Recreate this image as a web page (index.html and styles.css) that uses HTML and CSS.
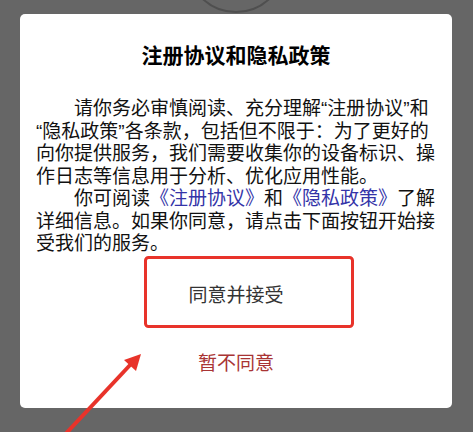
FILE: index.html
```html
<!DOCTYPE html>
<html lang="zh-CN">
<head>
    <meta charset="UTF-8">
    <meta name="viewport" content="width=device-width, initial-scale=1.0">
    <title>注册协议和隐私政策</title>
    <link rel="stylesheet" href="styles.css">
</head>
<body>
    <div class="avatar"></div>
    <div class="dialog">
        <div class="header">注册协议和隐私政策</div>
        <div class="content">
            <p>请你务必审慎阅读、充分理解“注册协议”和“隐私政策”各条款，包括但不限于：为了更好的向你提供服务，我们需要收集你的设备标识、操作日志等信息用于分析、优化应用性能。</p>
            <p>你可阅读<a href="#">《注册协议》</a>和<a href="#">《隐私政策》</a>了解详细信息。如果你同意，请点击下面按钮开始接受我们的服务。</p>
        </div>
        <div class="footer">
            <button class="button btn-ok">同意并接受</button>
            <button class="button btn-cancel">暂不同意</button>
        </div>
    </div>

    <!-- 标注：红框和箭头 -->
    <svg class="mark" width="473" height="432" viewBox="0 0 473 432">
        <rect x="145.5" y="257.5" width="207" height="69" rx="3" fill="none" stroke="#e8332a" stroke-width="3"/>
        <line x1="58" y1="442" x2="131" y2="364" stroke="#e8332a" stroke-width="4"/>
        <polygon points="141,354 136,371 124,360" fill="#e8332a"/>
    </svg>
</body>
</html>
```

FILE: styles.css
```css
html, body {
    margin: 0;
    padding: 0;
}
body {
    background-color: #666;
    height: 432px;
    overflow: hidden;
    position: relative;
    font-family: "Liberation Sans", "Noto Sans CJK SC", sans-serif;
    color: #111;
}
.avatar {
    position: absolute;
    left: 186px;
    top: -87px;
    width: 96px;
    height: 96px;
    border: 2px solid #4f4f4f;
    border-radius: 50%;
}
.dialog {
    position: relative;
    margin: 14px 21px 0 20px;
    height: 394px;
    box-sizing: border-box;
    padding: 27px 16px 0;
    background-color: #fff;
    border-radius: 5px;
}
.dialog .header {
    font-size: 21px;
    font-weight: bold;
    line-height: 30px;
    text-align: center;
    color: #000;
}
.dialog .content {
    margin-top: 27px;
    font-size: 19px;
    line-height: 22.5px;
}
.dialog .content p {
    margin: 0;
    text-indent: 2em;
}
.dialog .content a {
    color: #3434a8;
    text-decoration: none;
}
.dialog .footer {
    display: flex;
    flex-direction: column;
    align-items: center;
}
.button {
    border: 0;
    outline: none;
    background: none;
    padding: 0;
    font-family: inherit;
    font-size: 19px;
    cursor: pointer;
}
.dialog .btn-ok {
    margin-top: 12px;
    width: 210px;
    height: 56px;
    line-height: 56px;
    color: #333;
}
.dialog .btn-cancel {
    margin-top: 25px;
    line-height: 30px;
    color: #a93434;
}
.mark {
    position: absolute;
    left: 0;
    top: 0;
}
```
